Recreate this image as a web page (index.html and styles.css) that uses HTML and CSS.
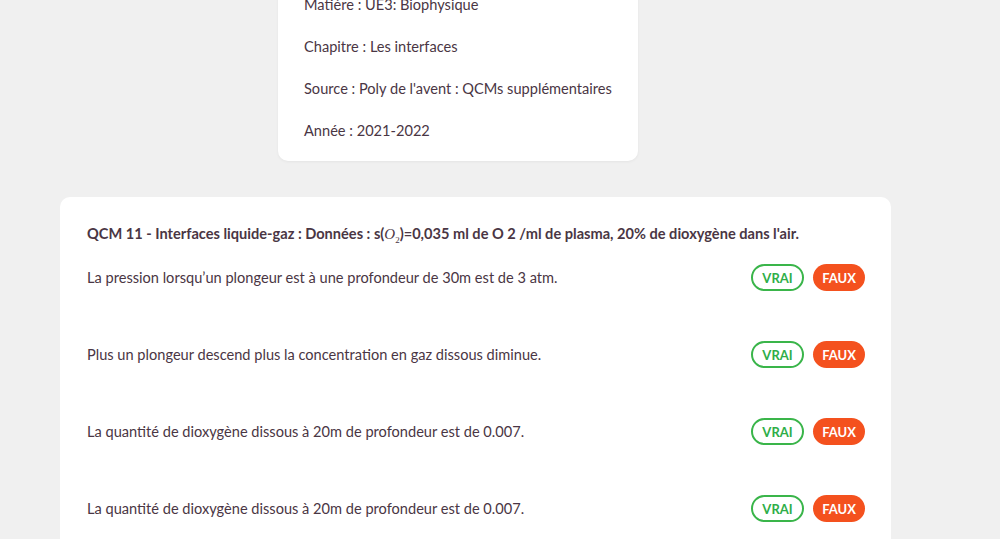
FILE: index.html
```html
<!DOCTYPE html>
<html lang="fr">
<head>
<meta charset="utf-8">
<link rel="stylesheet" href="styles.css">
</head>
<body>
<div class="page">
  <section class="info-card">
    <p>Matière : UE3: Biophysique</p>
    <p>Chapitre : Les interfaces</p>
    <p>Source : Poly de l'avent : QCMs supplémentaires</p>
    <p>Année : 2021-2022</p>
  </section>
  <section class="qcm-card">
    <h2 class="qcm-title">QCM 11 - Interfaces liquide-gaz : Données : s(<span class="math">O<sub>2</sub></span>)=0,035 ml de O 2 /ml de plasma, 20% de dioxygène dans l'air.</h2>
    <div class="rows">
      <div class="row">
        <span class="stmt">La pression lorsqu’un plongeur est à une profondeur de 30m est de 3 atm.</span>
        <div class="btns"><button class="vrai">VRAI</button><button class="faux">FAUX</button></div>
      </div>
      <div class="row">
        <span class="stmt">Plus un plongeur descend plus la concentration en gaz dissous diminue.</span>
        <div class="btns"><button class="vrai">VRAI</button><button class="faux">FAUX</button></div>
      </div>
      <div class="row">
        <span class="stmt">La quantité de dioxygène dissous à 20m de profondeur est de 0.007.</span>
        <div class="btns"><button class="vrai">VRAI</button><button class="faux">FAUX</button></div>
      </div>
      <div class="row">
        <span class="stmt">La quantité de dioxygène dissous à 20m de profondeur est de 0.007.</span>
        <div class="btns"><button class="vrai">VRAI</button><button class="faux">FAUX</button></div>
      </div>
    </div>
  </section>
</div>
</body>
</html>
```

FILE: styles.css
```css
html, body {
  margin: 0;
  padding: 0;
  background: #f0f0f0;
  height: 539px;
  overflow: hidden;
}
body {
  font-family: Lato, "Open Sans", sans-serif;
  color: #4a3644;
  font-size: 14.6px;
}
.page {
  display: flex;
  flex-direction: column;
  align-items: flex-start;
  margin-top: -25px;
}
.info-card {
  margin-left: 278px;
  width: 360px;
  box-sizing: border-box;
  background: #fff;
  border-radius: 10px;
  padding: 20px 26px 20px 26px;
  display: flex;
  flex-direction: column;
  gap: 22px;
  box-shadow: 0 1px 3px rgba(0,0,0,0.05);
}
.info-card p {
  margin: 0;
  line-height: 20px;
}
.qcm-card {
  margin-top: 36px;
  margin-left: 60px;
  width: 831px;
  box-sizing: border-box;
  background: #fff;
  border-radius: 10px;
  padding: 27px 26px 40px 27px;
  min-height: 400px;
}
.qcm-title {
  margin: 0;
  font-size: 14.6px;
  font-weight: 700;
  line-height: 20px;
  height: 20px;
}
.math {
  font-family: "Liberation Serif", serif;
  font-style: italic;
  font-weight: 400;
  font-size: 15px;
  line-height: 0;
}
.math sub {
  font-style: normal;
  font-size: 9px;
  line-height: 0;
}
.rows {
  display: flex;
  flex-direction: column;
  gap: 50px;
  margin-top: 20px;
}
.row {
  display: flex;
  align-items: center;
  justify-content: space-between;
  height: 27px;
}
.btns {
  display: flex;
  gap: 9px;
}
.btns button {
  font-family: Lato, "Open Sans", sans-serif;
  font-weight: 700;
  font-size: 13px;
  height: 27px;
  border-radius: 14px;
  padding: 0;
  cursor: pointer;
}
.vrai {
  width: 53px;
  background: #fff;
  color: #2fae48;
  border: 2px solid #3ab54a;
}
.faux {
  width: 52px;
  background: #f4511e;
  color: #fff;
  border: none;
}
```
